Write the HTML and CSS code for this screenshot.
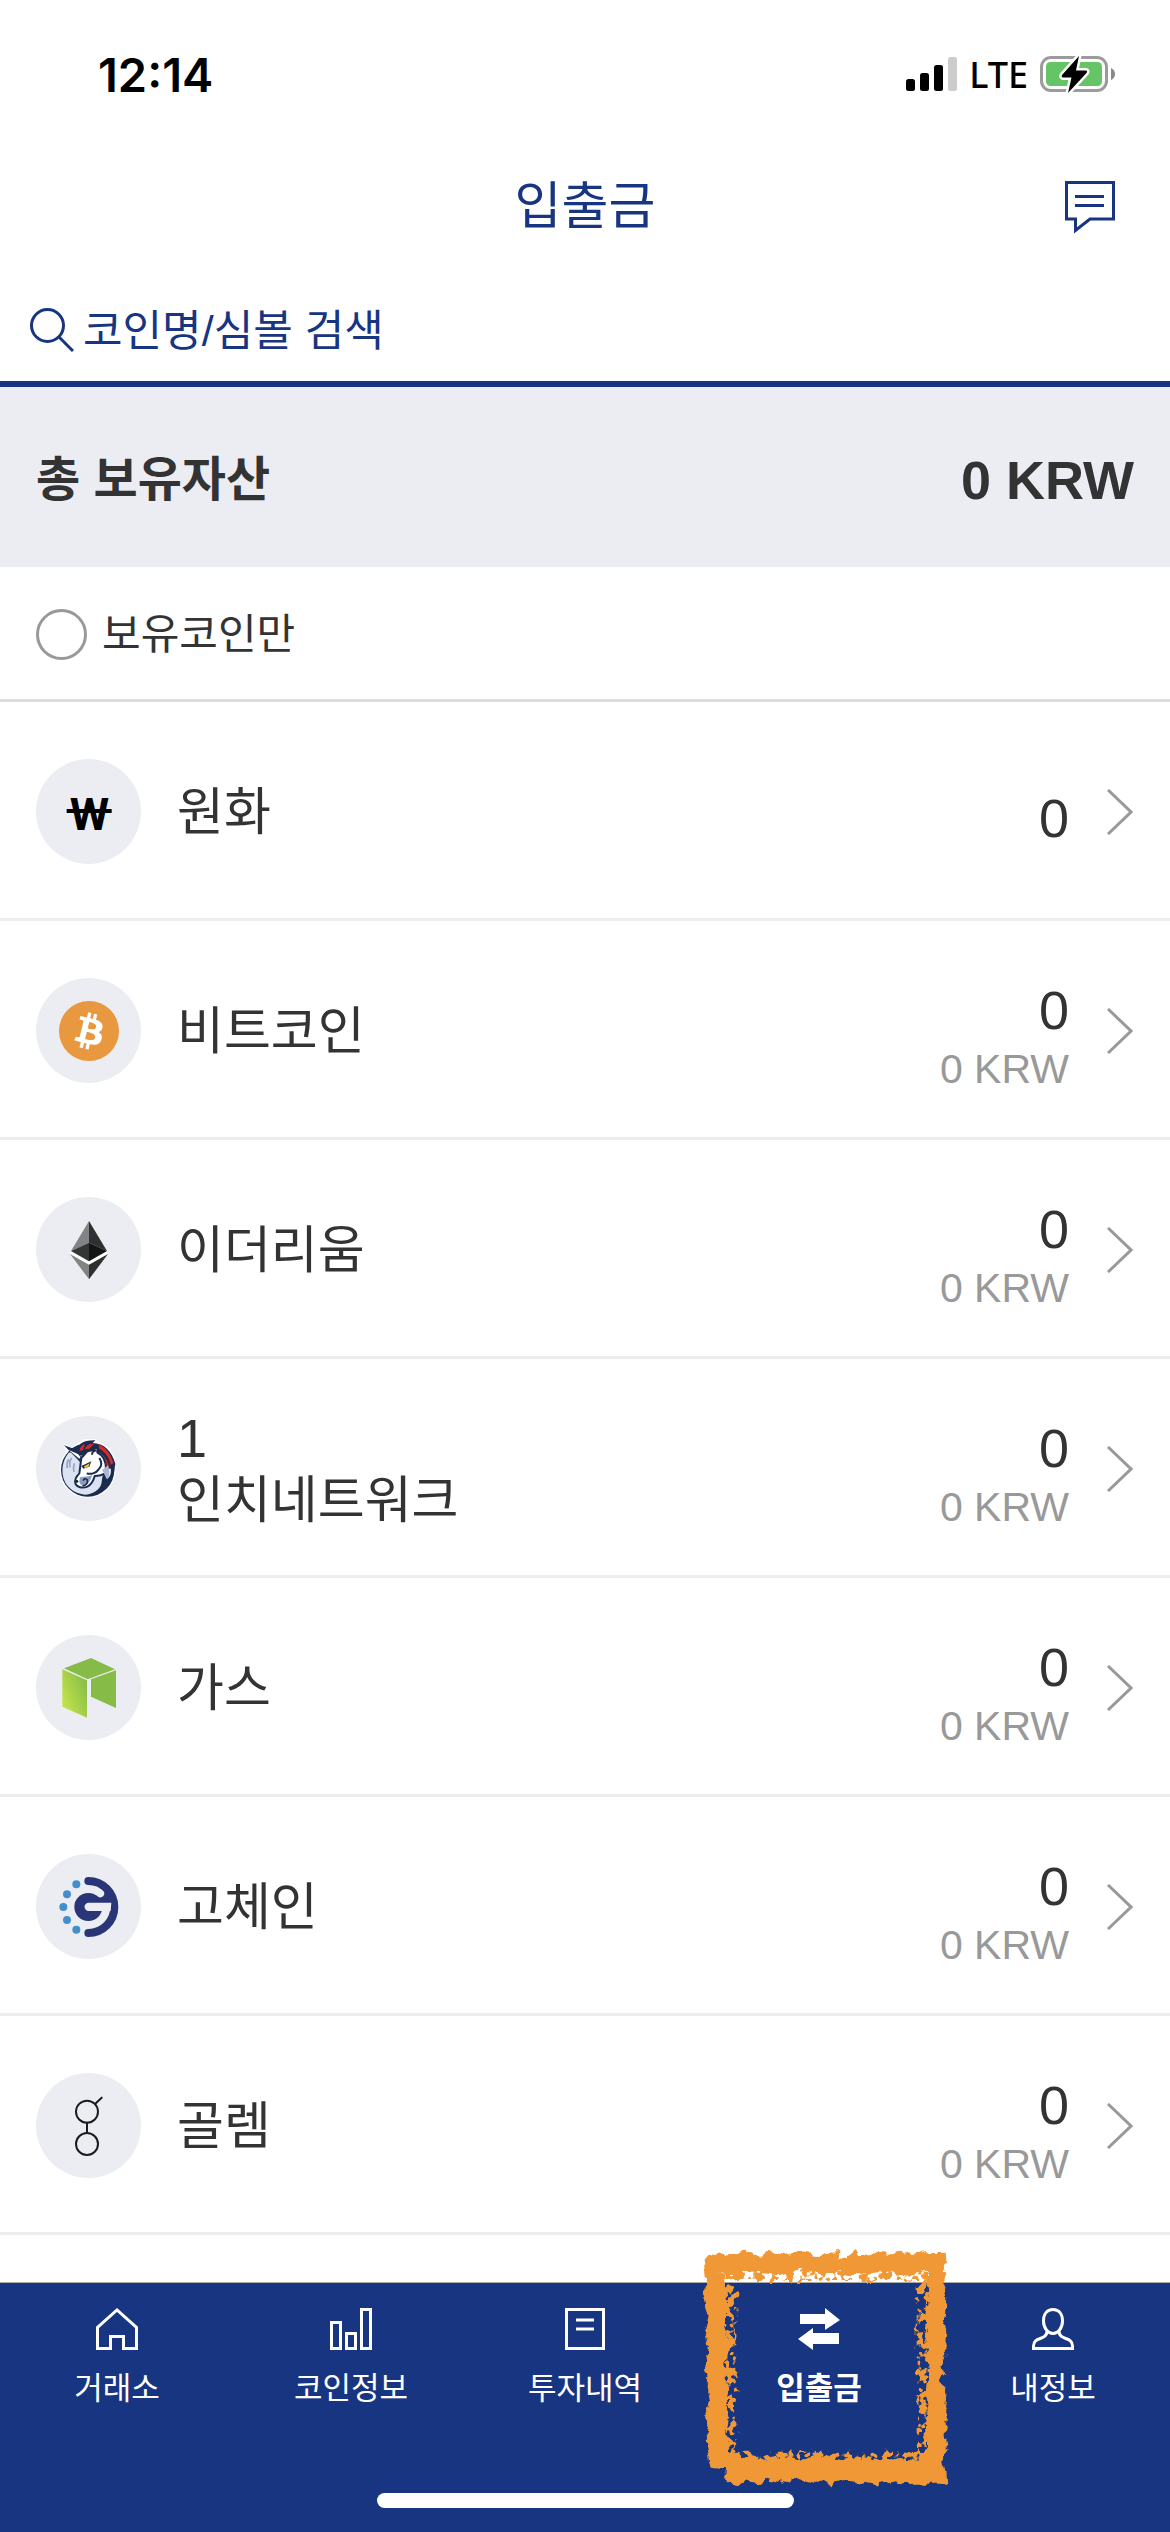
FILE: index.html
```html
<!DOCTYPE html>
<html lang="ko">
<head>
<meta charset="utf-8">
<meta name="viewport" content="width=device-width, initial-scale=1">
<title>입출금</title>
<link rel="stylesheet" href="styles.css">
</head>
<body>
<div class="app">
  <div class="status">
    <span class="status-time">12:14</span>
    <div class="status-right">
      <svg class="signal" viewBox="0 0 51 34" aria-hidden="true">
        <rect x="0" y="22" width="9" height="12" rx="2.500"/>
        <rect x="14" y="16" width="9" height="18" rx="2.500"/>
        <rect x="28" y="8" width="9" height="26" rx="2.500"/>
        <rect x="42" y="0" width="9" height="34" rx="2.500" fill="#ccc"/>
      </svg>
      <span class="status-net">LTE</span>
      <svg class="battery" viewBox="0 0 75 37" aria-hidden="true">
        <rect x="1.500" y="1.500" width="65" height="33" rx="9.500" fill="none" stroke="#9b9b9b" stroke-width="3"/>
        <rect x="6" y="6" width="56" height="24" rx="4.500" fill="#65c466"/>
        <path d="M71 12q4 2 4 6t-4 6z" fill="#888"/>
        <path d="M39 0L22 19q-1 2 1 2.500h8.500L28 37 46.500 17q1.500-2.500-1-2.500h-9.500z" fill="#000" stroke="#fff" stroke-width="5" stroke-linejoin="round" paint-order="stroke"/>
      </svg>
    </div>
  </div>

  <header class="header">
    <h1 class="title">입출금</h1>
    <button class="chat" type="button" aria-label="문의">
      <svg viewBox="0 0 50 53" aria-hidden="true">
        <path d="M1.500 1.500h47v36.500H25L10.500 49.500V38h-9z" fill="none" stroke="#183582" stroke-width="3"/>
        <path d="M10 15.500h29M10 24.500h29" stroke="#183582" stroke-width="3"/>
      </svg>
    </button>
  </header>

  <label class="search">
    <svg class="search-icon" viewBox="0 0 44 44" aria-hidden="true">
      <circle cx="17.500" cy="17.500" r="16" fill="none" stroke="#183582" stroke-width="3"/>
      <path d="M28.500 28.500L43 43" stroke="#183582" stroke-width="3"/>
    </svg>
    <input class="search-input" type="search" placeholder="코인명/심볼 검색" aria-label="코인명/심볼 검색">
  </label>

  <main class="main">
    <section class="total">
      <h2 class="total-label">총 보유자산</h2>
      <strong class="total-value">0 KRW</strong>
    </section>

    <label class="filter">
      <input class="filter-check" type="checkbox">
      <span>보유코인만</span>
    </label>

    <ul class="coins">
      <li><a class="coin" href="#krw">
        <svg class="coin-icon" viewBox="0 0 315 315" aria-hidden="true">
          <text class="won" x="160" y="213" text-anchor="middle">W</text>
          <path d="M92 156h135" stroke="#000" stroke-width="12"/>
        </svg>
        <span class="coin-name">원화</span>
        <span class="amounts"><span class="amount">0</span></span>
        <svg class="chevron" viewBox="0 0 26 46" aria-hidden="true"><path d="M1 1l23 22L1 45"/></svg>
      </a></li>
      <li><a class="coin" href="#btc">
        <svg class="coin-icon" viewBox="0 0 315 315" aria-hidden="true">
          <circle cx="159" cy="159" r="90" fill="#e8983e"/>
          <path transform="translate(69 69) scale(5.625)" fill="#fff" d="M23.189 14.020c.314-2.096-1.283-3.223-3.465-3.975l.708-2.840-1.728-.43-.69 2.765c-.454-.114-.92-.22-1.385-.326l.695-2.783L15.596 6l-.708 2.839c-.376-.086-.746-.17-1.104-.26l.002-.009-2.384-.595-.46 1.846s1.283.294 1.256.312c.7.175.826.638.805 1.006l-.806 3.235c.048.012.11.03.18.057l-.183-.045-1.130 4.532c-.086.212-.303.531-.793.41.018.025-1.256-.313-1.256-.313l-.858 1.978 2.250.561c.418.105.828.215 1.231.318l-.715 2.872 1.727.43.708-2.840c.472.127.93.245 1.378.357l-.706 2.828 1.728.43.715-2.866c2.948.558 5.164.333 6.097-2.333.752-2.146-.037-3.385-1.588-4.192 1.130-.26 1.980-1.003 2.207-2.538zm-3.950 5.538c-.533 2.147-4.148.986-5.320.695l.95-3.805c1.172.293 4.929.872 4.370 3.110zm.535-5.569c-.487 1.953-3.495.96-4.470.717l.86-3.450c.975.243 4.118.696 3.610 2.733z"/>
        </svg>
        <span class="coin-name">비트코인</span>
        <span class="amounts"><span class="amount">0</span><span class="value">0 KRW</span></span>
        <svg class="chevron" viewBox="0 0 26 46" aria-hidden="true"><path d="M1 1l23 22L1 45"/></svg>
      </a></li>
      <li><a class="coin" href="#eth">
        <svg class="coin-icon" viewBox="0 0 315 315" aria-hidden="true">
          <path d="M105 162l54 31 54-31 4 8-58 77-58-77z" fill="#fff"/>
          <path d="M159 72v65l-54 25z" fill="#828384"/>
          <path d="M159 72v65l54 25z" fill="#2f3030"/>
          <path d="M159 137v56l-54-31z" fill="#343535"/>
          <path d="M159 137v56l54-31z" fill="#141414"/>
          <path d="M102 171l57 32v44z" fill="#828384"/>
          <path d="M216 171l-57 32v44z" fill="#2f3030"/>
        </svg>
        <span class="coin-name">이더리움</span>
        <span class="amounts"><span class="amount">0</span><span class="value">0 KRW</span></span>
        <svg class="chevron" viewBox="0 0 26 46" aria-hidden="true"><path d="M1 1l23 22L1 45"/></svg>
      </a></li>
      <li><a class="coin" href="#1inch">
        <svg class="coin-icon" viewBox="0 0 315 315" aria-hidden="true">
          <circle cx="155" cy="162" r="84" fill="#fff"/>
          <path d="M82 84l24 10 38-24 34 0 42 26 22 44-20 20-120-20z" fill="#fff"/>
          <circle cx="155" cy="162" r="80" fill="#1b2c4f"/>
          <path d="M98 110c-20 24-24 58-12 86 10 22 34 38 60 40 24 0 44-14 50-32 2-10 2-22 6-30l-50-74z" fill="#dbe2f2"/>
          <path d="M107 126c-6 8-7 18-5 28M98 130c-5 8-6 18-4 26M115 142c-3 10-3 18-1 26" fill="none" stroke="#94a4c8" stroke-width="5"/>
          <path d="M84 88l40 14 16 28-8 8z" fill="#1b2c4f"/>
          <path d="M98 102l28 12 8 10-4 4z" fill="#fff"/>
          <path d="M122 110c0-24 18-38 56-37l-8 8c34 0 58 26 68 62l-4 26-30-46-40-18-28 14z" fill="#1b2c4f"/>
          <path d="M130 106c2-12 8-20 16-22l-4 18zM146 100c4-12 14-18 28-16l-14 14zM184 84c24 8 42 30 48 58l-8 4c-4-22-16-38-34-48zM190 108c16 12 26 26 30 48l-8-6c-6-14-12-22-22-32z" fill="#d22b2b"/>
          <path d="M136 126l18-20 18-4 14-12-2 20c18 8 26 26 26 50l16-8c4 18-2 32-10 38l-12-16c-8 4-18 6-28 6-4 16-10 26-22 32-14 6-32 2-36-10-3-12 4-22 12-30z" fill="#fff" stroke="#1b2c4f" stroke-width="6" stroke-linejoin="round"/>
          <path d="M182 104c-8-2-14 4-14 12M190 126c8 12 8 24-2 34-8 12-24 16-36 12" fill="none" stroke="#1b2c4f" stroke-width="6"/>
          <path d="M136 150l30-14-6 16-18 6z" fill="#1b2c4f"/>
          <path d="M144 151l17-9-4 11-10 4z" fill="#f3c22b"/>
          <path d="M132 184c14-2 26-2 36-6-4 18-14 30-26 32-8-2-12-8-12-14z" fill="#8d9cc0"/>
          <circle cx="122" cy="196" r="5" fill="#1b2c4f"/>
          <path d="M140 210c10-2 16-8 14-18-4-6-12-4-12 2" fill="none" stroke="#1b2c4f" stroke-width="5"/>
          <path d="M198 162l18-14c8 20 4 36-2 42-6-4-6-14-16-28z" fill="#a9b6d4"/>
        </svg>
        <span class="coin-name"><span class="latin">1</span><br>인치네트워크</span>
        <span class="amounts"><span class="amount">0</span><span class="value">0 KRW</span></span>
        <svg class="chevron" viewBox="0 0 26 46" aria-hidden="true"><path d="M1 1l23 22L1 45"/></svg>
      </a></li>
      <li><a class="coin" href="#gas">
        <svg class="coin-icon" viewBox="0 0 315 315" aria-hidden="true">
          <defs><linearGradient id="gas" x1="0" y1="1" x2="1" y2=".2"><stop offset="0" stop-color="#cdea4b"/><stop offset="1" stop-color="#86bb48"/></linearGradient></defs>
          <path d="M165 69l72 34-82 30-71-33z" fill="#86bb48"/>
          <path d="M79 103l74 33v112l-74-33z" fill="url(#gas)"/>
          <path d="M165 133l75-27v113l-75-34z" fill="#86bb48"/>
        </svg>
        <span class="coin-name">가스</span>
        <span class="amounts"><span class="amount">0</span><span class="value">0 KRW</span></span>
        <svg class="chevron" viewBox="0 0 26 46" aria-hidden="true"><path d="M1 1l23 22L1 45"/></svg>
      </a></li>
      <li><a class="coin" href="#gochain">
        <svg class="coin-icon" viewBox="0 0 315 315" aria-hidden="true">
          <g fill="#428fcb"><circle cx="121" cy="91" r="12"/><circle cx="93" cy="121" r="12"/><circle cx="82" cy="159" r="12"/><circle cx="93" cy="198" r="12"/><circle cx="121" cy="227" r="12"/></g>
          <path d="M157 81a78 78 0 0 1 0 156" fill="none" stroke="#293577" stroke-width="24" stroke-linecap="round"/>
          <circle cx="157" cy="159" r="42" fill="#293577"/>
          <path d="M182 126c10 8 23 4 23-8 0-8-8-13-16-17l20 0 30 46H182z" fill="#293577"/>
          <path d="M226 146h-68a12.500 12.500 0 0 0 0 25h66z" fill="#ecedf3"/>
        </svg>
        <span class="coin-name">고체인</span>
        <span class="amounts"><span class="amount">0</span><span class="value">0 KRW</span></span>
        <svg class="chevron" viewBox="0 0 26 46" aria-hidden="true"><path d="M1 1l23 22L1 45"/></svg>
      </a></li>
      <li><a class="coin" href="#golem">
        <svg class="coin-icon" viewBox="0 0 315 315" aria-hidden="true">
          <g fill="none" stroke="#1c1c1c" stroke-width="6" stroke-linecap="round"><circle cx="153" cy="116" r="33"/><circle cx="153" cy="213" r="33"/><path d="M153 149v31M177 93l20-19"/></g>
        </svg>
        <span class="coin-name">골렘</span>
        <span class="amounts"><span class="amount">0</span><span class="value">0 KRW</span></span>
        <svg class="chevron" viewBox="0 0 26 46" aria-hidden="true"><path d="M1 1l23 22L1 45"/></svg>
      </a></li>
    </ul>
  </main>

  <div class="dock">
    <nav class="tabs">
      <a class="tab" href="#exchange">
        <svg class="tab-icon" viewBox="0 0 42 42" aria-hidden="true"><path d="M1.500 40.500v-21L21 2l19.500 17.500v21h-13v-12h-13v12z"/></svg>
        <span>거래소</span>
      </a>
      <a class="tab" href="#info">
        <svg class="tab-icon" viewBox="0 0 42 42" aria-hidden="true"><path d="M1.500 14.500h9v26h-9zM16.500 25.500h9v15h-9zM31.500 1.500h9v39h-9z"/></svg>
        <span>코인정보</span>
      </a>
      <a class="tab" href="#history">
        <svg class="tab-icon" viewBox="0 0 42 42" aria-hidden="true"><path d="M2.500 1.500h37v39h-37zM12 12h18M12 21h18"/></svg>
        <span>투자내역</span>
      </a>
      <a class="tab tab-active" href="#transfer" aria-current="page">
        <svg class="tab-icon tab-icon-solid" viewBox="0 0 42 42" aria-hidden="true"><path d="M2 6h25V0l15 12-15 10v-6H2zM0 31l15-11v5h26v11H15v6z"/></svg>
        <span>입출금</span>
        <svg class="marker" viewBox="0 0 900 900" aria-hidden="true">
          <defs>
            <filter id="rough" x="0" y="0" width="900" height="900" filterUnits="userSpaceOnUse">
              <feTurbulence type="fractalNoise" baseFrequency=".035" numOctaves="2" seed="4" result="n"/>
              <feDisplacementMap in="SourceGraphic" in2="n" scale="30" xChannelSelector="R" yChannelSelector="G"/>
            </filter>
            <filter id="flecks" x="0" y="0" width="900" height="900" filterUnits="userSpaceOnUse">
              <feTurbulence type="fractalNoise" baseFrequency=".045" numOctaves="2" seed="9" result="n"/>
              <feColorMatrix in="n" type="matrix" values="0 0 0 0 0  0 0 0 0 0  0 0 0 0 0  18 0 0 0 -8.600" result="m"/>
              <feDisplacementMap in="SourceGraphic" in2="n" scale="40" xChannelSelector="G" yChannelSelector="B" result="d"/>
              <feComposite in="d" in2="m" operator="in"/>
            </filter>
          </defs>
          <path filter="url(#flecks)" fill="none" stroke="#ef9836" stroke-width="34" d="M146 166H724V712H146Z"/>
          <path filter="url(#rough)" fill="#ef9836" fill-rule="evenodd" d="M72 105l28 3 20-11 40 6 15-8 35 1 22 10 28-12 25 3 30 8 27-13 33 4 15 14 30-13 55-4-2 25 20-6 25-17 15 13 20-11 15 13 25-15 40 5 25-5 25 13 50-11 58-2-3 20 7 15-10 20 6 30-8 35 10 25-5 30-5 30 10 40-3 30 5 30-17 40 15 20-22 25 22 10-7 68 12 30-7 50 7 40-12 30 7 40 3 38-100 0-40 2-20-12-50 12-40-8-30 8-40-10-30 10-20-15-30 10-50-15-30 18-60-18-25 20-35-10-25 15-25-15-20-15 5-20-45-5-10-40-8-45 13-35-15-35 15-45-7-40 2-40-8-30 13-50-15-50 15-50-13-60 8-30-8-40 8-20zM134 158l-2 60 8 30-12 60 12 60-10 60 8 50-6 60 6 50-8 50 14 58 40 10 60 16 50-12 60 10 60-14 70 16 60-12 60 16 50-12 60 8 22-44-8-60 10-50-6-60 8-60-4-70-10-60 14-70-6-90-60 10-70-14-60 10-70-8-60 8-70-14-60 16-60-10-70 8-50-10z"/>
        </svg>
      </a>
      <a class="tab" href="#my">
        <svg class="tab-icon" viewBox="0 0 42 42" aria-hidden="true"><path d="M21 1.500c-6 0-9.500 4.500-9.500 11.500S16 25.500 21 25.500 30.500 20 30.500 13 27 1.500 21 1.500zM15 23c0 10-13.500 5-13.500 15v2.500h39V38c0-10-13.500-5-13.500-15"/></svg>
        <span>내정보</span>
      </a>
    </nav>
    <div class="home-bar"></div>
  </div>
</div>
</body>
</html>
```
FILE: styles.css
```css
* {
  box-sizing: border-box;
}

body {
  margin: 0;
  background: #fff;
  color: #333;
  font-family: "Liberation Sans", "Noto Sans CJK KR", sans-serif;
}

.app {
  display: flex;
  flex-direction: column;
  min-height: 100vh;
}

svg {
  display: block;
  flex: none;
}

/* Status bar */
.status {
  display: flex;
  align-items: center;
  justify-content: space-between;
  height: 141px;
  padding: 7px 55px 0 98px;
  color: #000;
  font-family: Inter, sans-serif;
}

.status-time {
  font-size: 47px;
  font-weight: 600;
}

.status-right {
  display: flex;
  align-items: center;
}

.signal {
  width: 51px;
  height: 34px;
}

.status-net {
  margin: 0 12px;
  font-family: "Noto Sans", sans-serif;
  font-size: 36px;
  font-weight: 500;
}

.battery {
  width: 75px;
  height: 37px;
}

/* Header */
.header {
  display: grid;
  grid-template-columns: 1fr auto 1fr;
  align-items: center;
  height: 132px;
  padding: 0 55px;
  color: #183582;
}

.title {
  grid-column: 2;
  margin: 0;
  font-size: 51px;
  font-weight: 400;
  line-height: 60px;
}

.chat {
  justify-self: end;
  padding: 0;
  border: 0;
  background: none;
}

.chat svg {
  width: 50px;
  height: 53px;
}

.search {
  display: flex;
  align-items: center;
  gap: 9px;
  height: 114px;
  padding: 6px 30px 0;
  border-bottom: 6px solid #183582;
}

.search-icon {
  width: 44px;
  height: 44px;
}

.search-input {
  flex: 1;
  min-width: 0;
  padding: 2px 0 0;
  border: 0;
  outline: 0;
  background: none;
  color: #183582;
  font-family: inherit;
  font-size: 43px;
  line-height: 60px;
}

.search-input::placeholder {
  color: #183582;
  opacity: 1;
}

/* Total and filter */
.main {
  flex: 1;
}

.total {
  display: flex;
  align-items: center;
  justify-content: space-between;
  height: 180px;
  padding: 6px 36px 0;
  background: #ecedf3;
}

.total-label {
  margin: 0;
  font-size: 48px;
  font-weight: 700;
  line-height: 60px;
}

.total-value {
  font-size: 54px;
  line-height: 60px;
}

.filter {
  display: flex;
  align-items: center;
  gap: 15px;
  height: 135px;
  padding: 3px 36px 0;
  border-bottom: 3px solid #ddd;
  font-size: 42px;
  line-height: 62px;
}

.filter-check {
  width: 51px;
  height: 51px;
  margin: 0;
  border: 3px solid #999;
  border-radius: 50%;
  appearance: none;
}

.filter-check:checked {
  background: #183582;
}

/* Coin list */
.coins {
  margin: 0;
  padding: 0;
  list-style: none;
}

.coin {
  display: flex;
  align-items: center;
  min-height: 219px;
  padding: 3px 37px 0 36px;
  border-bottom: 3px solid #ededed;
  color: inherit;
  text-decoration: none;
}

.coin-icon {
  width: 105px;
  height: 105px;
  border-radius: 50%;
  background: #ecedf3;
}

.won {
  font-family: Roboto, sans-serif;
  font-size: 135px;
  font-weight: 700;
}

.coin-name {
  flex: 1;
  padding: 2px 0 0 36px;
  font-size: 51px;
  line-height: 61px;
}

.latin {
  font-size: 54px;
}

.amounts {
  display: flex;
  flex-direction: column;
  align-items: flex-end;
  padding-top: 14px;
}

.amount {
  font-size: 54px;
  line-height: 63px;
}

.value {
  color: #999;
  font-size: 41px;
  line-height: 55px;
}

.chevron {
  width: 26px;
  height: 46px;
  margin-left: 38px;
  fill: none;
  stroke: #999;
  stroke-width: 3px;
}

/* Bottom navigation */
.dock {
  position: sticky;
  bottom: 0;
  padding-bottom: 24px;
  border-top: 1px solid #aaa;
  background: #183582;
}

.tabs {
  display: grid;
  grid-template-columns: repeat(5, 1fr);
  height: 210px;
}

.tab {
  position: relative;
  display: flex;
  flex-direction: column;
  align-items: center;
  gap: 17px;
  padding-top: 25px;
  color: #fff;
  font-size: 31px;
  line-height: 44px;
  text-decoration: none;
}

.tab-active {
  font-weight: 700;
}

.tab-icon {
  width: 42px;
  height: 42px;
  fill: none;
  stroke: #fff;
  stroke-width: 3px;
}

.tab-icon-solid {
  fill: #fff;
  stroke: none;
}

.marker {
  position: absolute;
  top: -63px;
  left: -20px;
  z-index: 1;
  width: 300px;
  height: 300px;
  pointer-events: none;
}

.home-bar {
  width: 417px;
  height: 15px;
  margin: 0 auto;
  border-radius: 8px;
  background: #fff;
}
```
